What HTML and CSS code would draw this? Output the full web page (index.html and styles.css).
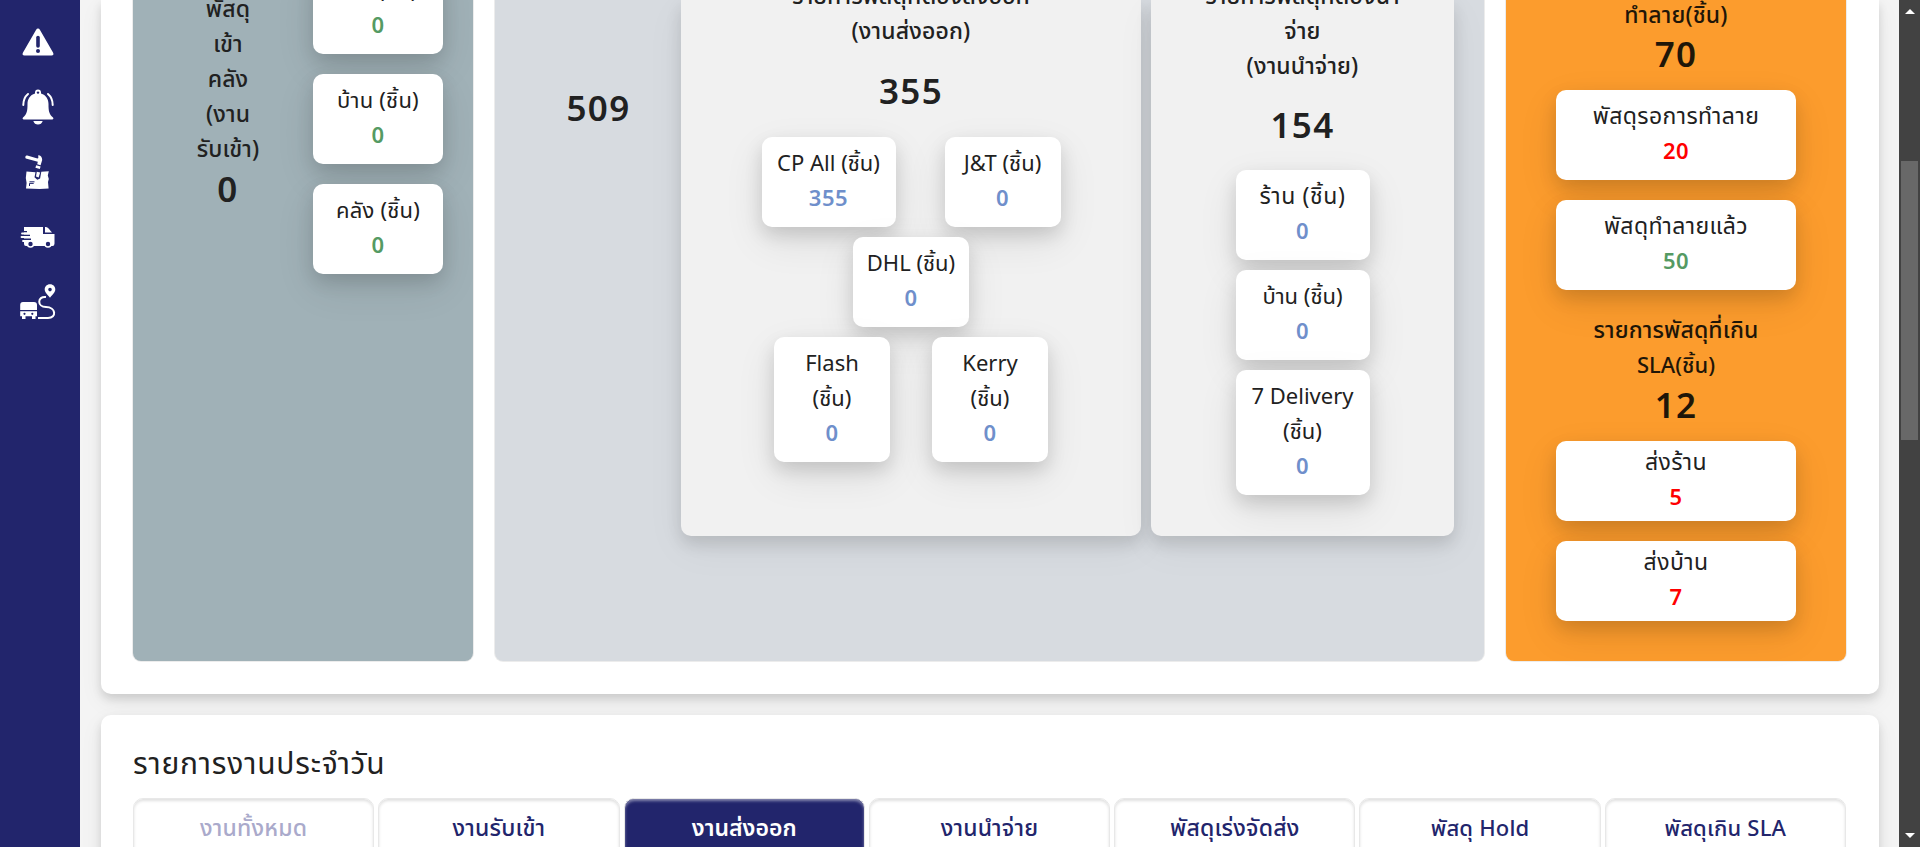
FILE: index.html
```html
<!DOCTYPE html>
<html lang="th">
<head>
<meta charset="utf-8">
<title>Dashboard</title>
<link rel="stylesheet" href="styles.css">
</head>
<body>
<div class="app">
  <nav class="sidebar">
    <svg class="icon" width="36" height="36" viewBox="0 0 36 36"><path fill="#fff" d="M18 4.500q1.200 0 2 1.400L33 28.500q1.400 3-1.500 3h-27q-2.900 0-1.500-3L16 5.900q.8-1.400 2-1.400z"/><path stroke="#22256c" stroke-width="3.600" stroke-linecap="round" d="M18 13.500v8.500"/><circle cx="18" cy="27" r="2" fill="#22256c"/></svg>
    <svg class="icon" width="36" height="36" viewBox="0 0 36 36"><path fill="#fff" d="M18 0.500a3 3 0 0 1 3 3v1c5 1.500 7.500 5.500 7.500 10.500 0 7 .5 10 4.500 13.500.8.900.4 2-.8 2H3.800c-1.200 0-1.600-1.100-.8-2 4-3.500 4.500-6.500 4.500-13.500 0-5 2.500-9 7.500-10.500v-1a3 3 0 0 1 3-3zM13.300 32h9.400q-1.200 3.500-4.700 3.500T13.300 32z"/><circle cx="18" cy="3.600" r="1.200" fill="#22256c"/><path fill="none" stroke="#fff" stroke-width="2" stroke-linecap="round" d="M8 5Q3.300 9 3.300 16M28 5q4.700 4 4.700 11"/></svg>
    <svg class="icon" width="36" height="36" viewBox="0 0 36 36"><path fill="#fff" d="M5.500 2.200q.6-1 1.800-.6l10.200 3q1.300-.6.700-3.400 3.800.2 4 4.800l-1.600 5.200-3.400-1 .6-2.400L5.800 4.600q-.8-.6-.3-2.400zM16.200 11.300l4.400 1.300-.8 2.400-4.400-1.300zM6.500 17.500l9 .7-1 5 2.800 2.600 2.800-1.400 1.200-6.600 7.500-.6-1 4.300 1 3.500-.8 3 .6 6.500-9 .5-13.600-.5.600-5.500-.8-5z"/><path fill="#fff" d="M16.800 17.800l3.400.6-1.600 5-2.600-1z"/><path fill="none" stroke="#22256c" stroke-width="1" d="M9.500 32v-2.600h4.200M9.500 27.800h5"/></svg>
    <svg class="icon" width="36" height="36" viewBox="0 0 36 36"><path fill="#fff" d="M4 8h19v7h11.500v9.500q0 2.500-2 2.500H6q-2 0-2-2zM25 8h1q1.500 0 2.600 1.600L32 13.500h-7z"/><path stroke="#22256c" stroke-width="1.500" d="M0 12.800h7M0 16.300h10M0 20.200h11"/><path stroke="#fff" stroke-width="1.800" stroke-linecap="round" d="M2 14.500h8M1.500 18h11M3 22h6"/><g fill="#22256c" stroke="#fff" stroke-width="1.600"><circle cx="10.500" cy="25" r="3"/><circle cx="28" cy="25" r="3"/></g></svg>
    <svg class="icon" width="36" height="36" viewBox="0 0 36 36"><path fill="#fff" d="M3 18h11q3 0 3 3v5H.2v-5q0-3 2.800-3zM.2 27.300H17v5h-1.500V35H12v-2.700H5.500V35H2v-2.700H.2z"/><g fill="#22256c"><circle cx="4.500" cy="29.800" r="1.100"/><circle cx="12.300" cy="29.800" r="1.100"/></g><path fill="#fff" fill-rule="evenodd" d="M30 .2c3.400 0 5.300 2.500 5.300 5.300 0 3-2.800 5-5.300 8.300-2.500-3.300-5.300-5.300-5.300-8.300C24.700 2.700 26.600.2 30 .2zm0 3.600a1.800 1.800 0 1 0 0 3.600 1.800 1.800 0 0 0 0-3.600z"/><path fill="none" stroke="#fff" stroke-width="2" d="M26 13c-9-1-9 10 0 10 10 0 11 11 2 11H18"/></svg>
  </nav>

  <main class="content">
    <section class="card summary">
      <div class="panel inbound">
        <div class="inbound-label">
          <div class="lead">พัสดุ<br>เข้า<br>คลัง<br>(งาน<br>รับเข้า)</div>
          <div class="total">0</div>
        </div>
        <div class="inbound-list">
          <div class="tile"><span>ร้าน (ชิ้น)</span><b class="green">0</b></div>
          <div class="tile"><span>บ้าน (ชิ้น)</span><b class="green">0</b></div>
          <div class="tile"><span>คลัง (ชิ้น)</span><b class="green">0</b></div>
        </div>
      </div>

      <div class="panel stock">
        <div class="stock-total total">509</div>
        <div class="group outbound">
          <div class="lead">รายการพัสดุที่ต้องส่งออก<br>(งานส่งออก)</div>
          <div class="total spaced">355</div>
          <div class="tile-row row-a">
            <div class="tile wide"><span>CP All (ชิ้น)</span><b class="blue">355</b></div>
            <div class="tile"><span>J&amp;T (ชิ้น)</span><b class="blue">0</b></div>
          </div>
          <div class="tile-row">
            <div class="tile"><span>DHL (ชิ้น)</span><b class="blue">0</b></div>
          </div>
          <div class="tile-row row-c">
            <div class="tile"><span>Flash<br>(ชิ้น)</span><b class="blue">0</b></div>
            <div class="tile"><span>Kerry<br>(ชิ้น)</span><b class="blue">0</b></div>
          </div>
        </div>
        <div class="group delivery">
          <div class="lead">รายการพัสดุที่ต้องนำ<br>จ่าย<br>(งานนำจ่าย)</div>
          <div class="total spaced">154</div>
          <div class="tile-col">
            <div class="tile wide"><span class="thai">ร้าน (ชิ้น)</span><b class="blue">0</b></div>
            <div class="tile wide"><span>บ้าน (ชิ้น)</span><b class="blue">0</b></div>
            <div class="tile wide"><span>7 Delivery<br>(ชิ้น)</span><b class="blue">0</b></div>
          </div>
        </div>
      </div>

      <div class="panel alerts">
        <div class="lead">ทำลาย(ชิ้น)</div>
        <div class="total">70</div>
        <div class="alert-list">
          <div class="tile"><span>พัสดุรอการทำลาย</span><b class="red">20</b></div>
          <div class="tile"><span>พัสดุทำลายแล้ว</span><b class="green">50</b></div>
        </div>
        <div class="lead sla">รายการพัสดุที่เกิน<br><span class="latin">SLA(ชิ้น)</span></div>
        <div class="total">12</div>
        <div class="alert-list">
          <div class="tile short"><span>ส่งร้าน</span><b class="red">5</b></div>
          <div class="tile short"><span>ส่งบ้าน</span><b class="red">7</b></div>
        </div>
      </div>
    </section>

    <section class="card daily">
      <h2 class="daily-title">รายการงานประจำวัน</h2>
      <div class="tabs">
        <div class="tab muted">งานทั้งหมด</div>
        <div class="tab">งานรับเข้า</div>
        <div class="tab active">งานส่งออก</div>
        <div class="tab">งานนำจ่าย</div>
        <div class="tab">พัสดุเร่งจัดส่ง</div>
        <div class="tab latin">พัสดุ Hold</div>
        <div class="tab latin">พัสดุเกิน SLA</div>
      </div>
    </section>
  </main>

  <div class="scrollbar">
    <i class="arrow up"></i>
    <i class="thumb"></i>
    <i class="arrow down"></i>
  </div>
</div>
</body>
</html>
```
FILE: styles.css
```css
* { box-sizing: border-box; }
body {
  margin: 0;
  height: 847px;
  overflow: hidden;
  background: #f4f4f4;
  color: #212121;
  font-family: "Noto Sans", "Noto Sans Thai", "Open Sans", sans-serif;
  font-size: 22px;
  line-height: 35px;
}
.app { display: flex; height: 847px; overflow: hidden; }

.sidebar {
  width: 80px;
  flex: none;
  background: #22256c;
  display: flex;
  flex-direction: column;
  align-items: center;
  gap: 29px;
  padding: 24px 5px 0 0;
}
.icon { flex: none; display: block; }

.content {
  flex: 1;
  min-width: 0;
  padding: 0 20px 0 21px;
}
.card {
  background: #fff;
  box-shadow: 0 5px 10px rgba(0,0,0,.13), 0 8px 24px rgba(0,0,0,.06);
}
.summary {
  height: 694px;
  border-radius: 0 0 10px 10px;
  padding: 0 33px 33px 32px;
  display: grid;
  grid-template-columns: 340px 989px 340px;
  column-gap: 22px;
}
.panel {
  height: 661px;
  border-radius: 0 0 8px 8px;
  box-shadow: 0 0 0 1px #ececec;
}
.inbound { background: #a0b1b7; display: flex; overflow: hidden; }
.inbound-label { width: 190px; margin-top: -9px; }
.inbound-label .total { margin-top: 1px; }
.inbound-list {
  width: 130px;
  margin: -36px 0 0 -10px;
  flex: none;
  display: flex;
  flex-direction: column;
  gap: 20px;
}
.lead { text-align: center; font-size: 23px; font-weight: 500; letter-spacing: .15px; }
.lead .latin { font-size: 22px; letter-spacing: 0; }
.total {
  text-align: center;
  font-size: 35px;
  line-height: 44px;
  font-weight: 600;
  letter-spacing: 1.3px;
}
.total.spaced { margin: 21px 0 24px; }

.tile {
  width: 116px;
  flex: none;
  background: #fff;
  border-radius: 10px;
  padding: 8px 0 12px;
  text-align: center;
  display: flex;
  flex-direction: column;
  font-size: 22px;
  box-shadow: 0 8px 18px rgba(0,0,0,.13), 0 14px 40px rgba(0,0,0,.09);
}
.tile b { font-size: 22px; font-weight: 600; letter-spacing: .5px; }
.tile.wide { width: 134px; }
.inbound-list .tile { width: 130px; letter-spacing: .2px; }
.thai { font-size: 23px; letter-spacing: .6px; }
.green { color: #559a63; }
.blue { color: #6f8fcb; }
.red { color: #ff0000; }

.stock { background: #d7dbe0; display: flex; overflow: hidden; }
.stock-total { width: 186px; margin-top: 86px; padding-left: 21px; }
.group {
  height: 536px;
  background: #f1f1f1;
  border-radius: 0 0 10px 10px;
  box-shadow: 0 8px 16px rgba(0,0,0,.12), 0 12px 40px rgba(0,0,0,.05);
  padding-top: 1px;
}
.group .lead { margin-top: -23px; }
.outbound { width: 460px; margin-right: 10px; }
.delivery { width: 303px; }
.delivery .total.spaced { margin: 20px 0 23px; }
.tile-row { display: flex; justify-content: center; gap: 42px; margin-bottom: 10px; }
.row-a { gap: 49px; }
.tile-col { display: flex; flex-direction: column; align-items: center; gap: 10px; }

.alerts { background: #fc9c2d; color: #1f1608; display: flow-root; }
.alerts .lead { margin-top: -3px; }
.alerts .total { line-height: 42px; margin-top: 1px; }
.alert-list {
  display: flex;
  flex-direction: column;
  align-items: center;
  gap: 20px;
  padding-top: 15px;
}
.alert-list .tile { width: 240px; color: #212121; font-size: 23px; letter-spacing: .4px; }
.alert-list .tile.short { height: 80px; padding: 3px 0; }
.alerts .lead.sla { margin-top: 22px; }
.alerts .sla + .total { margin-top: 2px; }

.daily {
  height: 200px;
  margin-top: 21px;
  border-radius: 10px;
  padding: 28px 33px 0 32px;
}
.daily-title {
  margin: 0 0 15px;
  font-size: 30px;
  line-height: 40px;
  font-weight: 400;
  letter-spacing: .8px;
}
.tabs { display: grid; grid-template-columns: repeat(7, 1fr); gap: 4px; }
.tab {
  height: 80px;
  border: 1px solid #e8e8e8;
  border-radius: 10px;
  box-shadow: inset 0 2px 3px rgba(0,0,0,.12);
  padding-top: 11px;
  text-align: center;
  color: #22256c;
  font-size: 23px;
  font-weight: 500;
  letter-spacing: .2px;
}
.tab.latin { font-size: 22px; letter-spacing: .2px; }
.tab.muted { color: #aaaacb; }
.tab.active {
  background: #22256c;
  color: #fff;
  font-weight: 600;
  letter-spacing: 0;
  box-shadow: inset 0 2px 3px rgba(255,255,255,.45);
}

.scrollbar {
  width: 21px;
  flex: none;
  background: #424242;
  display: flex;
  flex-direction: column;
  align-items: center;
}
.arrow { width: 0; height: 0; border: 5px solid transparent; }
.up { border-top: 0; border-bottom-color: #fff; margin-top: 9px; }
.down { border-bottom: 0; border-top-color: #fff; margin: auto 0 9px; }
.thumb { width: 17px; height: 279px; margin-top: 147px; background: #686868; }
```
